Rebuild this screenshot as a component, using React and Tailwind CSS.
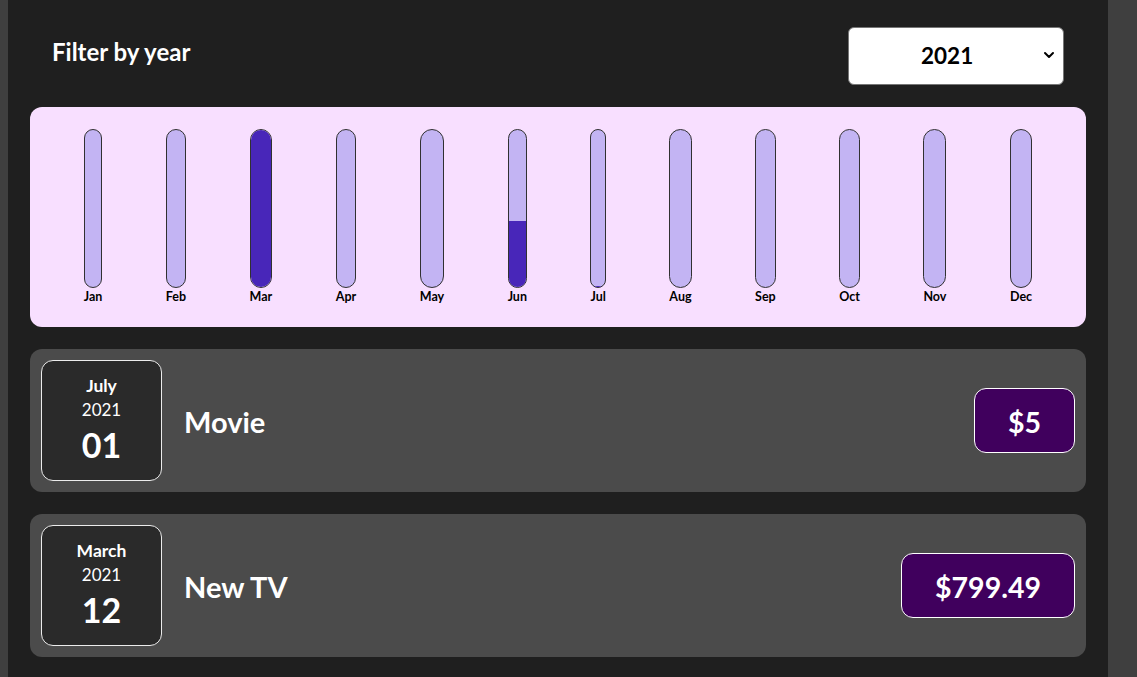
import React from 'react';
import { ChevronDown } from 'lucide-react';

const months = [
  { label: 'Jan', fill: 0 },
  { label: 'Feb', fill: 0 },
  { label: 'Mar', fill: 100 },
  { label: 'Apr', fill: 0 },
  { label: 'May', fill: 0 },
  { label: 'Jun', fill: 42 },
  { label: 'Jul', fill: 0.6 },
  { label: 'Aug', fill: 0 },
  { label: 'Sep', fill: 0 },
  { label: 'Oct', fill: 0 },
  { label: 'Nov', fill: 0 },
  { label: 'Dec', fill: 0 },
];

const expenses = [
  { month: 'July', year: '2021', day: '01', title: 'Movie', amount: '$5' },
  { month: 'March', year: '2021', day: '12', title: 'New TV', amount: '$799.49' },
];

const ChartBar = ({ label, fill }) => (
  <div className="h-full flex flex-col items-center">
    <div className="h-full w-full border border-[#313131] rounded-[12px] bg-[#c3b4f3] overflow-hidden flex flex-col justify-end">
      <div className="w-full bg-[#4826b9]" style={{ height: `${fill}%` }} />
    </div>
    <div className="font-bold text-[12.5px] leading-[17px] text-center text-black">{label}</div>
  </div>
);

const ExpenseItem = ({ month, year, day, title, amount }) => (
  <div className="flex items-center justify-between p-[11px] my-[22px] rounded-[12px] bg-[#4b4b4b]">
    <div className="flex items-center flex-1">
      <div className="flex flex-col items-center justify-center w-[121px] h-[121px] border border-[#ececec] bg-[#2a2a2a] text-white rounded-[12px]">
        <div className="text-[17.5px] font-bold leading-[24px]">{month}</div>
        <div className="text-[17px] leading-[24px]">{year}</div>
        <div className="text-[34px] font-bold leading-[46px]">{day}</div>
      </div>
      <h2 className="flex-1 mx-[22px] text-white text-[29px] font-bold leading-[40px] mt-[3px]">{title}</h2>
    </div>
    <div className="text-[28.5px] font-bold text-white bg-[#40005d] border border-white py-[11px] px-[33px] rounded-[12px] leading-[41px]">
      <span className="relative top-[2px]">{amount}</span>
    </div>
  </div>
);

export default function App() {
  return (
    <div
      className="min-h-screen h-[677px] overflow-hidden bg-[#3f3f3f]"
      style={{ fontFamily: 'Lato, "Noto Sans", sans-serif' }}
    >
      <div className="ml-[8px] w-[1100px] h-full bg-[#1f1f1f] px-[22px] pt-[5px]">
        <div className="px-[22px] text-white">
          <div className="flex w-full items-center justify-between my-[22px]">
            <label className="font-bold text-[24px] mb-[11px] relative top-[1px]">Filter by year</label>
            <div className="relative flex items-center justify-start pl-[72px] w-[216px] h-[58px] bg-white rounded-[6px] border border-[#767676] text-black">
              <span className="font-bold text-[22.5px]">2021</span>
              <ChevronDown size={16} strokeWidth={3} className="absolute right-[6px] top-[19px]" />
            </div>
          </div>
        </div>
        <div className="p-[22px] rounded-[12px] bg-[#f8dfff] flex justify-around h-[220px]">
          {months.map((m) => (
            <ChartBar key={m.label} {...m} />
          ))}
        </div>
        {expenses.map((e) => (
          <ExpenseItem key={e.title} {...e} />
        ))}
      </div>
    </div>
  );
}
